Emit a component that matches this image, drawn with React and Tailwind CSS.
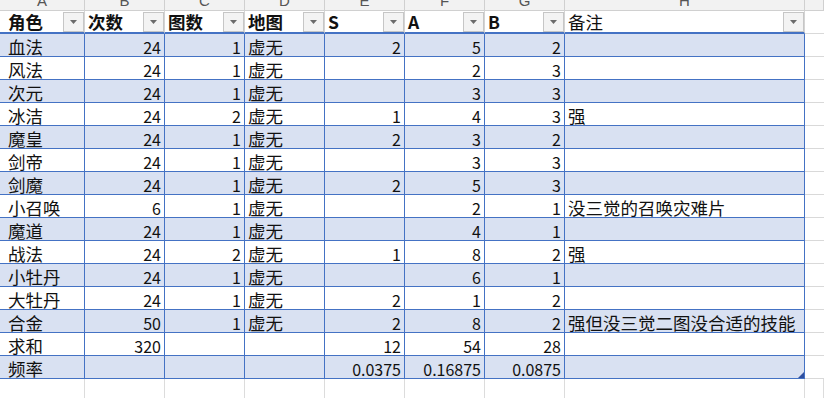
import React from 'react';

const rows = [
  ['血法', 24, 1, '虚无', 2, 5, 2, ''],
  ['风法', 24, 1, '虚无', '', 2, 3, ''],
  ['次元', 24, 1, '虚无', '', 3, 3, ''],
  ['冰洁', 24, 2, '虚无', 1, 4, 3, '强'],
  ['魔皇', 24, 1, '虚无', 2, 3, 2, ''],
  ['剑帝', 24, 1, '虚无', '', 3, 3, ''],
  ['剑魔', 24, 1, '虚无', 2, 5, 3, ''],
  ['小召唤', 6, 1, '虚无', '', 2, 1, '没三觉的召唤灾难片'],
  ['魔道', 24, 1, '虚无', '', 4, 1, ''],
  ['战法', 24, 2, '虚无', 1, 8, 2, '强'],
  ['小牡丹', 24, 1, '虚无', '', 6, 1, ''],
  ['大牡丹', 24, 1, '虚无', 2, 1, 2, ''],
  ['合金', 50, 1, '虚无', 2, 8, 2, '强但没三觉二图没合适的技能'],
  ['求和', 320, '', '', 12, 54, 28, ''],
  ['频率', '', '', '', '0.0375', '0.16875', '0.0875', ''],
];

const headers = ['角色', '次数', '图数', '地图', 'S', 'A', 'B', '备注'];
const letters = ['A', 'B', 'C', 'D', 'E', 'F', 'G', 'H', ''];
// text columns are left aligned, the rest sit on the right like excel numbers
const leftCols = [0, 3, 7];

const FilterButton = () => (
  <div className="ml-auto flex h-[20px] w-[21px] shrink-0 items-center justify-center border border-[#c6c6c6] bg-[#f3f3f3]">
    <svg width="7" height="4" viewBox="0 0 7 4">
      <path d="M0 0 L7 0 L3.5 4 Z" fill="#6b6b6b" />
    </svg>
  </div>
);

export default function App() {
  return (
    <div
      className="h-[398px] w-[824px] overflow-hidden bg-white text-[16px] text-[#111]"
      style={{ fontFamily: '"Noto Sans CJK SC", "Noto Sans", sans-serif' }}
    >
      <div className="grid grid-cols-[85px_80px_80px_80px_80px_80px_80px_240px_1fr]">
        {/* column letters, cut off at the top */}
        {letters.map((l, i) => (
          <div
            key={'l' + i}
            className="flex h-[11px] items-end justify-center overflow-hidden border-b border-r border-[#d0d0d0] bg-[#f2f2f2] pb-[2px]"
          >
            <span className="text-[15px] leading-none text-[#555]" style={{ fontFamily: '"Liberation Sans", sans-serif' }}>
              {l}
            </span>
          </div>
        ))}

        {/* table header */}
        {headers.map((h, i) => (
          <div
            key={'h' + i}
            className={`flex h-[23px] items-center border-b-2 border-r border-b-[#4472c4] border-r-[#d4d4d4] pt-[1px] ${
              i === 0 ? 'pl-[8px]' : 'pl-[3px]'
            }`}
          >
            <span className={`text-[17.5px] leading-none ${h === '备注' ? 'font-normal' : 'font-bold'}`}>{h}</span>
            <FilterButton />
          </div>
        ))}
        <div className="h-[23px] border-b border-[#d9d9d9]" />

        {/* body */}
        {rows.map((r, ri) => (
          <React.Fragment key={'r' + ri}>
            {r.map((v, ci) => (
              <div
                key={ci}
                className={`relative flex h-[23px] items-center border-b border-r border-[#4472c4] pt-[3px] leading-none ${
                  ri % 2 === 0 ? 'bg-[#d9e1f2]' : 'bg-white'
                } ${
                  leftCols.includes(ci)
                    ? ci === 0
                      ? 'justify-start pl-[8px] text-[17.5px]'
                      : 'justify-start pl-[3px] text-[17.5px]'
                    : 'justify-end pr-[3px]'
                }`}
              >
                {v}
                {ri === rows.length - 1 && ci === 7 && (
                  <svg className="absolute bottom-0 right-0" width="6" height="6" viewBox="0 0 6 6">
                    <path d="M6 0 L6 6 L0 6 Z" fill="#2f4f9f" />
                  </svg>
                )}
              </div>
            ))}
            <div className="h-[23px] border-b border-[#d9d9d9]" />
          </React.Fragment>
        ))}

        {/* empty sheet row below the table */}
        {letters.map((_, i) => (
          <div key={'e' + i} className="h-[23px] border-r border-[#dcdcdc]" />
        ))}
      </div>
    </div>
  );
}
